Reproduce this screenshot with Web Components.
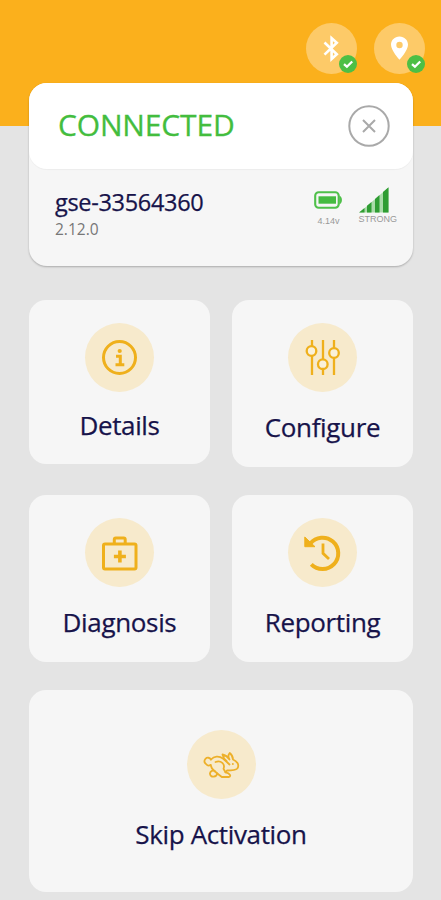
<!DOCTYPE html>
<html lang="en">
<head>
<meta charset="utf-8">
<meta name="viewport" content="width=device-width, initial-scale=1">
<title>Sensor</title>
<style>
  body {
    margin: 0;
    background: #e4e4e4;
    font-family: "Open Sans", "Noto Sans", sans-serif;
  }
</style>
</head>
<body>
<sensor-app></sensor-app>

<script>
const ICONS = {
  bluetooth: `<svg viewBox="0 0 51 51" fill="none" stroke="#fff" stroke-width="2.6" stroke-linejoin="miter"><path d="M18.5 19.5 30.8 31.2 25.6 36V15.2L30.8 19.8 18.5 31.6"/></svg>`,
  pin: `<svg viewBox="0 0 51 51"><path fill="#fff" fill-rule="evenodd" d="M25.5 13.5c-4.9 0-8.5 3.6-8.5 8.3 0 5.8 8.5 15 8.5 15s8.5-9.2 8.5-15c0-4.7-3.6-8.3-8.5-8.3zm0 5.3a3.2 3.2 0 1 1 0 6.4 3.2 3.2 0 0 1 0-6.4z"/></svg>`,
  check: `<svg viewBox="0 0 18 18" fill="none" stroke="#fff" stroke-width="2.3"><path d="M5 9.2 7.9 11.7 13.2 6.5"/></svg>`,
  close: `<svg viewBox="0 0 42 42" fill="none" stroke="#a9a9a9"><circle cx="21" cy="21" r="19.7" stroke-width="2"/><path stroke-width="2" d="m15 15 12 12M27 15 15 27"/></svg>`,
  battery: `<svg viewBox="0 0 28 18"><rect x="1.2" y="1.2" width="23.5" height="15.6" rx="3.5" fill="none" stroke="#4fc04a" stroke-width="2.1"/><rect x="4.5" y="5.3" width="17.5" height="7.400" fill="#45bb40"/><path d="M25.300 4.500c3.500 1.500 3.500 7.500 0 9z" fill="#4fc04a"/></svg>`,
  signal: `<svg viewBox="0 0 30 26"><path fill="#a9dba8" d="M.5 25.5 29.5.5V25.5z"/><path fill="#2f9d33" d="M0 25.5 5.5 21V25.5zM8 18.8 12.5 15V25.5H8zM16 12 20.5 8V25.5H16zM24 5 29.5.3V25.5H24z"/></svg>`,
  info: `<svg viewBox="0 0 69 69" fill="none" stroke="#efb01c"><circle cx="34.5" cy="34.5" r="16" stroke-width="3"/><circle cx="34.7" cy="28" r="2.1" fill="#efb01c" stroke="none"/><path stroke-width="3" d="M31 33.2H35.3V41.5M30.5 41.7H39.3"/></svg>`,
  sliders: `<svg viewBox="0 0 69 69" fill="none" stroke="#efb01c" stroke-width="2.3"><path d="M24 17v6.500M24 32.500v19.500M35 17v19.500M35 45.500v6.500M46 17v8.500M46 34.500v17.500"/><g fill="#faf1da"><circle cx="23.5" cy="28" r="4.8"/><circle cx="34.8" cy="41.2" r="4.8"/><circle cx="46" cy="30" r="4.8"/></g></svg>`,
  medkit: `<svg viewBox="0 0 69 69" fill="none" stroke="#efb01c" stroke-width="3" stroke-linejoin="round"><rect x="18.5" y="26" width="32.5" height="25" rx="1.5"/><path d="M29.300 25.500V21.500Q29.300 20 30.800 20H38.700Q40.200 20 40.200 21.500V25.500"/><path stroke-width="3.6" d="M34.900 32.500v12M28.900 38.500h12"/></svg>`,
  history: `<svg viewBox="0 0 69 69" fill="none" stroke="#efb01c"><path stroke-width="4" d="M23.300 46.300A15.700 15.700 0 1 0 22.300 25.500"/><path fill="#efb01c" stroke="#efb01c" stroke-linejoin="round" d="M16.800 19V28.700H27z"/><path stroke-width="2.8" d="M35 25.500V35.300L41 41"/></svg>`,
  rabbit: `<svg viewBox="0 0 69 69" fill="none" stroke="#edb02a" stroke-width="1.8" stroke-linecap="round" stroke-linejoin="round"><path d="M24 29.500A3.500 3.500 0 1 0 19.300 34.300Q21 36.500 23.600 35"/><path d="M24 29.500C27 26 32 25.500 36 28.500L42.500 34.500"/><path d="M23.600 35C24 37.500 25.500 39.500 27.800 41.300A3 3 0 1 0 27 46.500Q29.500 46.500 30.300 43.500L34.800 47H42C44.500 46 43 43.300 38.500 42.300L40 40.500C45 40.500 48.500 40.500 50.300 38.500C53 34.500 49.500 31 46 29.500C46 27 44.500 24.500 42.700 23C41 25 41.200 27.500 42.500 29.500C40.500 26.500 38 25 35.500 24.500C36 27 37.500 29.500 39.500 31"/><path d="M28.500 32C34 30 38.500 34 36.500 38.800L38.500 42.300M27.800 41.300 30.300 43.500"/><path d="M45.800 34h.1"/></svg>`
};

function render(element, markup) {
  const template = document.createElement("template");
  template.innerHTML = markup;
  element.attachShadow({ mode: "open" });
  element.shadowRoot.appendChild(template.content.cloneNode(true));
}

class AppIcon extends HTMLElement {
  connectedCallback() {
    if (this.shadowRoot) return;
    render(this, `
      <style>
        :host { display: block; }
        svg { display: block; width: 100%; height: 100%; }
      </style>
      ${ICONS[this.getAttribute("name")]}
    `);
  }
}

class StatusBadge extends HTMLElement {
  constructor() {
    super();
    render(this, `
      <style>
        :host {
          display: block;
          position: relative;
          width: 51px;
          height: 51px;
          border-radius: 50%;
          background: #fdca68;
        }
        .check {
          position: absolute;
          right: 0;
          bottom: 1px;
          width: 18px;
          height: 18px;
          border-radius: 50%;
          background: #4dbf45;
        }
      </style>
      <slot></slot>
      <app-icon class="check" name="check"></app-icon>
    `);
  }
}

class AppHeader extends HTMLElement {
  constructor() {
    super();
    render(this, `
      <style>
        :host {
          display: flex;
          justify-content: flex-end;
          align-items: flex-start;
          gap: 17px;
          box-sizing: border-box;
          height: 126px;
          padding: 23px 16px 0 0;
          background: #fbb01c;
        }
      </style>
      <slot></slot>
    `);
  }
}

class DeviceCard extends HTMLElement {
  constructor() {
    super();
    render(this, `
      <style>
        :host {
          display: block;
          position: relative;
          height: 183px;
          border-radius: 18px;
          background: #f6f6f6;
          box-shadow: 0 1px 2px rgba(0, 0, 0, .25);
        }
        header {
          display: flex;
          align-items: center;
          justify-content: space-between;
          box-sizing: border-box;
          height: 86px;
          padding: 0 23px 0 29px;
          border-radius: 18px;
          background: #fff;
          box-shadow: 0 1px 1px rgba(0, 0, 0, .04);
          color: #43bd3e;
          font-size: 30px;
          line-height: 40px;
          letter-spacing: -.15px;
          -webkit-text-stroke: .3px;
        }
        header slot { display: block; padding-bottom: 2px; }
        header app-icon { width: 42px; height: 42px; }
        .body {
          display: flex;
          justify-content: space-between;
          padding: 17px 16px 0 26px;
        }
        .name {
          color: #17134a;
          font-size: 23.5px;
          line-height: 32px;
          letter-spacing: -.32px;
          -webkit-text-stroke: .25px;
        }
        .version {
          padding-top: 1px;
          color: #777;
          font-size: 15.5px;
          line-height: 20px;
        }
        .meters { display: flex; gap: 16px; padding-top: 1px; }
      </style>
      <header>
        <slot name="state"></slot>
        <app-icon name="close"></app-icon>
      </header>
      <div class="body">
        <div>
          <div class="name"><slot name="name"></slot></div>
          <div class="version"><slot name="version"></slot></div>
        </div>
        <div class="meters"><slot></slot></div>
      </div>
    `);
  }
}

class DeviceMeter extends HTMLElement {
  constructor() {
    super();
    render(this, `
      <style>
        :host {
          display: flex;
          flex-direction: column;
          align-items: center;
          color: #999;
          font: 9px/10px "Liberation Sans", sans-serif;
        }
      </style>
      <slot name="icon"></slot>
      <slot></slot>
    `);
  }
}

class MenuTile extends HTMLElement {
  constructor() {
    super();
    render(this, `
      <style>
        :host {
          display: flex;
          flex-direction: column;
          align-items: center;
          box-sizing: border-box;
          height: 167px;
          padding-top: 23px;
          border-radius: 17px;
          background: #f6f6f6;
          color: #17134a;
          font-size: 26px;
          line-height: 36px;
          letter-spacing: -.35px;
          -webkit-text-stroke: .25px;
        }
        .circle {
          width: 69px;
          height: 69px;
          margin-bottom: var(--label-gap, 17px);
          border-radius: 50%;
          background: #f7eacc;
        }
      </style>
      <app-icon class="circle" name="${this.getAttribute("icon")}"></app-icon>
      <slot></slot>
    `);
  }
}

class SensorApp extends HTMLElement {
  constructor() {
    super();
    render(this, `
      <style>
        :host { display: block; height: 900px; overflow: hidden; }
        main { margin: -43px 28px 0 29px; }
        .menu {
          display: grid;
          grid-template-columns: 181px 181px;
          column-gap: 22px;
          row-gap: 28px;
          align-items: start;
          margin-top: 34px;
        }
        .details { height: 164px; --label-gap: 15px; }
        .skip { grid-column: 1 / -1; height: 202px; padding-top: 40px; }
        .battery { width: 28px; height: 18px; margin: 4px 0 7px; }
        .signal { width: 30px; height: 26px; margin: 0 8px 1px 0; }
      </style>
      <app-header>
        <status-badge><app-icon name="bluetooth"></app-icon></status-badge>
        <status-badge><app-icon name="pin"></app-icon></status-badge>
      </app-header>
      <main>
        <device-card>
          <span slot="state">CONNECTED</span>
          <span slot="name">gse-33564360</span>
          <span slot="version">2.12.0</span>
          <device-meter><app-icon slot="icon" class="battery" name="battery"></app-icon>4.14v</device-meter>
          <device-meter><app-icon slot="icon" class="signal" name="signal"></app-icon>STRONG</device-meter>
        </device-card>
        <div class="menu">
          <menu-tile class="details" icon="info"><span>Details</span></menu-tile>
          <menu-tile icon="sliders"><span>Configure</span></menu-tile>
          <menu-tile icon="medkit"><span>Diagnosis</span></menu-tile>
          <menu-tile icon="history"><span>Reporting</span></menu-tile>
          <menu-tile class="skip" icon="rabbit"><span>Skip Activation</span></menu-tile>
        </div>
      </main>
    `);
  }
}

customElements.define("app-icon", AppIcon);
customElements.define("status-badge", StatusBadge);
customElements.define("app-header", AppHeader);
customElements.define("device-card", DeviceCard);
customElements.define("device-meter", DeviceMeter);
customElements.define("menu-tile", MenuTile);
customElements.define("sensor-app", SensorApp);
</script>
</body>
</html>
